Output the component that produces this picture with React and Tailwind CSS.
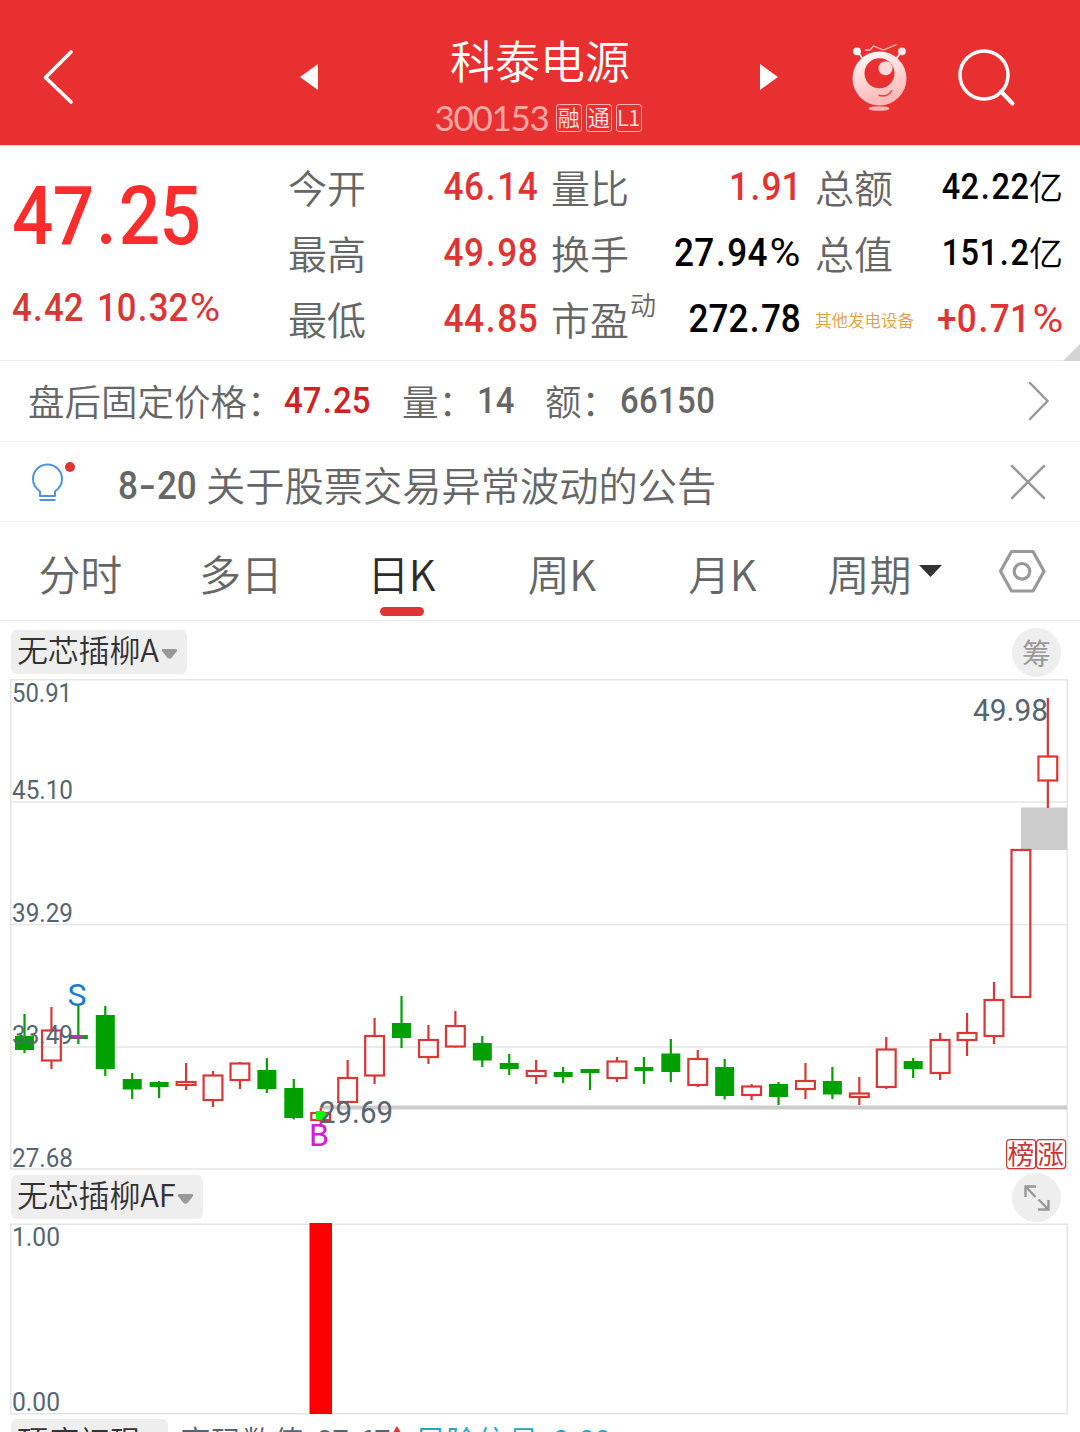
import clsx from 'clsx'

const RED = '#d93636'
const GREEN = '#00a000'

// [direction, high, body top, body bottom, low] in chart pixels
const candles = [
  ['d', 1014, 1036, 1050, 1053],
  ['u', 1007, 1029.5, 1061.5, 1069],
  ['d', 1005, 1035, 1039, 1044],
  ['d', 1006, 1015, 1069, 1076],
  ['d', 1073, 1079, 1089.5, 1099],
  ['d', 1081, 1082, 1087, 1098],
  ['u', 1063, 1081, 1086, 1090],
  ['u', 1071, 1074.5, 1101, 1107],
  ['u', 1062, 1062.5, 1081, 1089],
  ['d', 1058, 1070, 1089, 1093],
  ['d', 1079, 1088, 1118, 1119.5],
  ['u', 1108, 1112, 1121, 1127],
  ['u', 1060, 1077, 1103, 1103],
  ['u', 1018, 1035, 1076.5, 1084],
  ['d', 996, 1023, 1038, 1048],
  ['u', 1025, 1039, 1058, 1064],
  ['u', 1011, 1025, 1047.5, 1047.5],
  ['d', 1036, 1043, 1060.5, 1067],
  ['d', 1054, 1063, 1069, 1075],
  ['u', 1060, 1070, 1077, 1084],
  ['d', 1067, 1072, 1077, 1083],
  ['d', 1069, 1069, 1073, 1090],
  ['u', 1057, 1060.5, 1079, 1082],
  ['d', 1057, 1067, 1071, 1084],
  ['d', 1039, 1053.5, 1072, 1082],
  ['u', 1050, 1058, 1086, 1087],
  ['d', 1059, 1067, 1096, 1099.5],
  ['u', 1084, 1085.5, 1096, 1100],
  ['d', 1082, 1084, 1097, 1105],
  ['u', 1063, 1080, 1090, 1099],
  ['d', 1067, 1081, 1094.5, 1099],
  ['u', 1077, 1092.5, 1098, 1105],
  ['u', 1037, 1048.5, 1088, 1089],
  ['d', 1058, 1061, 1069, 1078],
  ['u', 1033, 1039, 1074, 1080],
  ['u', 1013, 1032, 1041, 1056],
  ['u', 982, 999, 1037, 1044],
  ['u', 849, 849, 998, 998],
  ['u', 698, 755.5, 781.5, 808],
]

const tabs = ['分时', '多日', '日K', '周K', '月K']

// symbols sit a little wider than Roboto sets them
const symbolClass = {
  '.': 'mx-[0.04em]',
  '-': 'inline-block scale-x-[1.4] mx-[0.1em]',
  '%': 'inline-block font-normal scale-x-[1.2] ml-[0.13em] mr-[0.07em]',
}

function Num({ children, className, right }) {
  return (
    <span
      className={clsx(
        'inline-block whitespace-nowrap font-[Roboto,sans-serif] font-medium scale-x-[0.9]',
        right ? 'origin-right' : 'origin-left',
        className,
      )}
    >
      {[...String(children)].map((c, i) =>
        symbolClass[c] ? <span key={i} className={symbolClass[c]}>{c}</span> : c
      )}
    </span>
  )
}

function Label({ children, sup }) {
  return (
    <span className="flex text-[39px] text-[#666] leading-[65px]">
      {children}
      {sup && <span className="text-[26px] leading-[36px] ml-px">{sup}</span>}
    </span>
  )
}

function Candle({ data, x }) {
  const [dir, high, top, bottom, low] = data
  if (dir === 'd') {
    return (
      <g fill={GREEN}>
        <rect x={x - 1.1} y={high} width="2.2" height={low - high} />
        <rect x={x - 9.5} y={top} width="19" height={bottom - top} />
      </g>
    )
  }
  return (
    <g fill="none" stroke={RED} strokeWidth="2.2">
      <path d={`M${x} ${high}V${top + 1}M${x} ${bottom - 1}V${low}`} />
      <rect x={x - 9.4} y={top + 1} width="18.8" height={bottom - top - 2} />
    </g>
  )
}

function ChartText({ x, y, w, size = 25.5, children, fill = '#56656f' }) {
  return (
    <text x={x} y={y} fontSize={size} fill={fill} textLength={w} lengthAdjust="spacingAndGlyphs"
      className="font-[Roboto,sans-serif] font-normal">
      {children}
    </text>
  )
}

function Chip({ children }) {
  return (
    <div className="h-[44px] flex items-center gap-[2px] rounded-[6px] bg-[#eee] pl-[6px] pr-[9px] text-[31px] leading-[42px] text-[#333]">
      <span className="-mt-[6px] tracking-[-0.2px]">{children}</span>
      <svg width="17" height="12" viewBox="0 0 17 12" className="mt-[4px]">
        <path d="M1.500 1h14q1.300 1 .3 2.300L10.500 10q-2 1.500-4 0L1.200 3.300Q.2 2 1.500 1z" fill="#999" />
      </svg>
    </div>
  )
}

function Mascot() {
  return (
    <svg width="60" height="72" viewBox="849 41 60 72">
      <defs>
        <linearGradient id="body" x1="0" y1="0" x2="0.3" y2="1">
          <stop offset="0" stopColor="#fff" />
          <stop offset="0.5" stopColor="#ffdada" />
          <stop offset="1" stopColor="#ffb8b8" />
        </linearGradient>
      </defs>
      <path d="M865 50h5l3.500-4 10 4 13-5.500" fill="none" stroke="#ffc4c4" strokeWidth="1.300" />
      <path d="M857 51l6 8M902 51l-6 8" stroke="#fff" strokeWidth="1.600" />
      <circle cx="857" cy="51.300" r="3.900" fill="#fff" />
      <circle cx="902" cy="51.300" r="3.900" fill="#ffe6e6" />
      <circle cx="879.500" cy="78.500" r="27" fill="url(#body)" />
      <circle cx="879.500" cy="73.300" r="15" fill="#e83030" />
      <circle cx="885.500" cy="68.300" r="7" fill="#ffd9d9" />
      <path d="M878.500 95.300q9 2.500 13.500-5" fill="none" stroke="#e04848" strokeWidth="1.600" />
      <ellipse cx="879" cy="108.500" rx="10.500" ry="2.300" fill="#ffb3b3" />
    </svg>
  )
}

function Header() {
  return (
    <header className="h-[146px] flex bg-[#e83030] border-b border-[#ffd6d6] text-white">
      <div className="w-[320px] pt-[9px] pl-[42px] flex items-center justify-between">
        <svg width="34" height="58" viewBox="0 0 34 58">
          <path d="M29 4L3.500 29.500 29 54" fill="none" stroke="#fff" strokeWidth="3.600" strokeLinecap="round" strokeLinejoin="round" />
        </svg>
        <svg width="21" height="28" viewBox="0 0 21 28"><path d="M1 14L19 1v26z" fill="#fff" /></svg>
      </div>
      <div className="w-[440px] flex flex-col items-center pt-[30px]">
        <h1 className="text-[45px] leading-[60px] font-[350]">科泰电源</h1>
        <div className="flex items-center gap-[4px] mt-[9px] -ml-[4px]">
          <span className="font-[Lato,sans-serif] font-normal text-[35px] leading-[36px] text-[#ffa6a6] tracking-[-1.3px] mr-[3px]">300153</span>
          {['融', '通', 'L1'].map(t => (
            <span key={t} className="w-[26px] h-[28px] mt-px flex items-center justify-center rounded-[3px] border border-[#ffb0b0] text-[22px] leading-[24px] pb-[3px] text-[#ffe4e4] tracking-[-0.5px]">
              {t}
            </span>
          ))}
        </div>
      </div>
      <div className="w-[320px] flex items-center pt-[9px]">
        <svg width="19" height="28" viewBox="0 0 19 28"><path d="M0 1l18 13L0 27z" fill="#fff" /></svg>
        <div className="ml-[70px]"><Mascot /></div>
        <svg width="60" height="60" viewBox="956 47 60 60" className="ml-[47px]">
          <circle cx="984" cy="75" r="24" fill="none" stroke="#fff" strokeWidth="3.500" />
          <path d="M1001 91.500l11.500 12" stroke="#fff" strokeWidth="4" strokeLinecap="round" />
        </svg>
      </div>
    </header>
  )
}

function Quote() {
  return (
    <section className="relative h-[215px] flex border-b border-[#eaeaea] pt-[8px]">
      <div className="w-[288px] pl-[12px] flex flex-col items-start">
        <Num className="text-[81px] leading-[90px] mt-[18px] text-[#fa2d2d] tracking-[-0.8px]">47.25</Num>
        <div className="mt-[21px] flex text-[38.500px] leading-[50px] text-[#d93636]">
          <div className="w-[85px] flex"><Num>4.42</Num></div>
          <Num>10.32%</Num>
        </div>
      </div>
      <div className="w-[250px] flex flex-col">
        {[['今开', '46.14'], ['最高', '49.98'], ['最低', '44.85']].map(([k, v]) => (
          <div key={k} className="h-[66px] flex justify-between">
            <Label>{k}</Label>
            <Num right className="text-[39px] leading-[66px] tracking-[0.5px] text-[#e03434]">{v}</Num>
          </div>
        ))}
      </div>
      <div className="w-[263px] pl-[13px] flex flex-col">
        <div className="h-[66px] flex justify-between">
          <Label>量比</Label>
          <Num right className="text-[39px] leading-[66px] text-[#e03434]">1.91</Num>
        </div>
        <div className="h-[66px] flex justify-between">
          <Label>换手</Label>
          <Num right className="text-[39px] leading-[66px] tracking-[0.3px] text-black">27.94%</Num>
        </div>
        <div className="h-[66px] flex justify-between">
          <Label sup="动">市盈</Label>
          <Num right className="text-[39px] leading-[66px] text-black">272.78</Num>
        </div>
      </div>
      <div className="w-[262px] pl-[14px] flex flex-col">
        {[['总额', '42.22'], ['总值', '151.2']].map(([k, v]) => (
          <div key={k} className="h-[66px] flex text-black">
            <Label>{k}</Label>
            <Num right className="ml-auto text-[36px] leading-[67px] tracking-[0.5px]">{v}</Num>
            <span className="text-[34px] leading-[64px]">亿</span>
          </div>
        ))}
        <div className="h-[66px] flex justify-between">
          <span className="text-[16.500px] leading-[68px] text-[#e0a040] whitespace-nowrap">其他发电设备</span>
          <Num right className="text-[39px] leading-[66px] tracking-[0.3px] text-[#e03434]">+0.71%</Num>
        </div>
      </div>
      <svg width="17" height="17" viewBox="0 0 17 17" className="absolute right-0 bottom-[-1px]">
        <path d="M17 0v17H0z" fill="#d4d4d4" />
      </svg>
    </section>
  )
}

function AfterHours() {
  return (
    <section className="h-[81px] flex items-center border-b border-[#eee] pl-[28px] pr-[30px] text-[36.500px] text-[#666]">
      <span className="w-[256px] whitespace-nowrap">盘后固定价格：</span>
      <div className="w-[118px] flex"><Num className="text-[36.500px] text-[#cc2424]">47.25</Num></div>
      <span className="w-[75px] whitespace-nowrap">量：</span>
      <div className="w-[68px] flex"><Num className="text-[36.500px]">14</Num></div>
      <span className="w-[75px] whitespace-nowrap">额：</span>
      <Num className="text-[36.500px] tracking-[0.4px]">66150</Num>
      <svg width="24" height="42" viewBox="0 0 24 42" className="ml-auto">
        <path d="M4 3l17.500 18L4 39" fill="none" stroke="#999" strokeWidth="2.500" strokeLinecap="round" />
      </svg>
    </section>
  )
}

function Notice() {
  return (
    <section className="h-[80px] flex items-center border-b border-[#eee] pl-[30px] pr-[33px] text-[#666]">
      <svg width="48" height="44" viewBox="30 459 48 44" fill="none" stroke="#4f94d8" strokeWidth="2">
        <path d="M39.500 499h16M40 495h15v-4.500q7-5 7-12.500a14.500 14.500 0 0 0-29 0q0 7.500 7 12.500z" strokeLinejoin="round" />
        <circle cx="70" cy="466" r="5" fill="#e03434" stroke="none" />
      </svg>
      <div className="flex ml-[40px] pt-[9px]">
        <div className="w-[88px] flex"><Num className="text-[39px] leading-[56px]">8-20</Num></div>
        <span className="text-[39.250px] leading-[52px]">关于股票交易异常波动的公告</span>
      </div>
      <svg width="38" height="38" viewBox="0 0 38 38" className="ml-auto">
        <path d="M3 3l32 32M35 3L3 35" stroke="#999" strokeWidth="2.500" strokeLinecap="round" />
      </svg>
    </section>
  )
}

function Tabs() {
  return (
    <nav className="h-[99px] flex border-b border-[#eee] text-[42px] text-[#666]">
      {tabs.map(t => (
        <div key={t} className={clsx('w-[160.500px] flex flex-col items-center pt-[20px]', t === '日K' && 'text-[#2c2c2c]')}>
          <span className="leading-[62px] tracking-[-0.3px]">{t}</span>
          {t === '日K' && <span className="w-[44px] h-[9px] rounded-full bg-[#e03434] mt-[3px] ml-px" />}
        </div>
      ))}
      <div className="flex pt-[20px] pl-[25px] gap-[7px]">
        <span className="leading-[62px]">周期</span>
        <svg width="23" height="12" viewBox="0 0 23 12" className="mt-[23px]"><path d="M0 0h23L11.500 12z" fill="#333" /></svg>
      </div>
      <svg width="48" height="44" viewBox="998 549 48 44" className="ml-auto mr-[34px] mt-[27px]" fill="none" stroke="#999" strokeWidth="3.200">
        <path d="M1011.500 551.500h21.500L1044 571.300 1033 591h-21.500L1000.500 571.300z" strokeLinejoin="round" />
        <circle cx="1022" cy="571.300" r="7.800" />
      </svg>
    </nav>
  )
}

function PriceChart() {
  return (
    <svg width="1080" height="492" viewBox="0 679 1080 492" className="block">
      <g stroke="#e6e6e6" strokeWidth="1.500" fill="none">
        <path d="M10.750 679.750H1067.200V1169H10.750z" />
        <path d="M11 802H1067M11 924.500H1067M11 1047H1067" />
      </g>
      <rect x="1021" y="807.500" width="46" height="42.500" fill="#ccc" />
      <rect x="320" y="1105.500" width="747" height="4" fill="#ccc" />
      {candles.map((c, i) => <Candle key={i} data={c} x={24.5 + i * 26.93} />)}
      <rect x="72" y="1035" width="12" height="3.500" fill="#d020d0" />
      <path d="M316 1111h8l3 4-4 5h-7z" fill="#00ff00" />
      <ChartText x="12" y="702" w="60">50.91</ChartText>
      <ChartText x="12" y="799" w="61">45.10</ChartText>
      <ChartText x="12" y="922" w="61">39.29</ChartText>
      <ChartText x="12" y="1044" w="61">33.49</ChartText>
      <ChartText x="12" y="1167" w="61">27.68</ChartText>
      <ChartText x="973" y="721" w="75" size={31}>49.98</ChartText>
      <ChartText x="319" y="1123" w="74" size={31}>29.69</ChartText>
      <ChartText x="67.500" y="1006" w="19" size={31} fill="#1a7cc8">S</ChartText>
      <ChartText x="309" y="1146" w="20" size={31} fill="#d020d0">B</ChartText>
      <g fill="none" stroke="#c04040" strokeWidth="1.200">
        <rect x="1006.600" y="1139.600" width="29" height="29" rx="3" />
        <rect x="1036.600" y="1139.600" width="29" height="29" rx="3" />
      </g>
      <g fontSize="26.500" fill="#c83838" className="font-normal">
        <text x="1007.700" y="1163.500">榜</text>
        <text x="1037.500" y="1163.500">涨</text>
      </g>
    </svg>
  )
}

function SignalChart() {
  return (
    <svg width="1080" height="192" viewBox="0 1223 1080 192" className="block">
      <path d="M10.750 1224.200H1067.200V1413.800H10.750z" stroke="#e6e6e6" strokeWidth="1.500" fill="none" />
      <rect x="309.500" y="1223" width="22.500" height="191" fill="#ff0000" />
      <ChartText x="12" y="1246" w="48">1.00</ChartText>
      <ChartText x="12" y="1411" w="48">0.00</ChartText>
    </svg>
  )
}

export default function App() {
  return (
    <div className="w-[1080px] h-[1432px] overflow-hidden bg-white font-['Noto_Sans_CJK_SC',sans-serif] font-[350]">
      <Header />
      <Quote />
      <AfterHours />
      <Notice />
      <Tabs />
      <div className="h-[58px] flex items-start justify-between pl-[11px] pr-[19px] pt-[6px]">
        <div className="pt-[3px]"><Chip>无芯插柳A</Chip></div>
        <span className="size-[49px] mt-px rounded-full bg-[#eee] text-[#999] text-[29px] font-normal flex items-center justify-center leading-none">筹</span>
      </div>
      <PriceChart />
      <div className="h-[52px] flex items-start justify-between pl-[11px] pr-[19px] pt-[2px]">
        <div className="pt-[2px]"><Chip>无芯插柳AF</Chip></div>
        <span className="size-[49px] rounded-full bg-[#eee] flex items-center justify-center">
          <svg width="26" height="26" viewBox="0 0 26 26" fill="none" stroke="#999" strokeWidth="2.400">
            <path d="M1.500 12V1.500H12M2 2l9.500 10M24.500 15v9.500H14M24 24l-9.500-9.500" />
          </svg>
        </span>
      </div>
      <SignalChart />
      <div className="h-[60px] flex items-start pl-[11px] pt-[4px] text-[31px] leading-[41px] text-[#56656f]">
        <div className="w-[157px] h-[44px] rounded-[6px] bg-[#eee] pl-[6px] text-[#333]">顶底初现</div>
        <span className="w-[137px] pl-[12px] whitespace-nowrap">密码数值</span>
        <div className="w-[73px] pl-[12px] flex"><Num className="text-[31px] leading-[46px]">37.67</Num></div>
        <svg width="14" height="20" viewBox="0 0 14 20" className="mt-[7px] ml-[12px]">
          <path d="M7 0l6 10H9v10H5V10H1z" fill="#e03434" />
        </svg>
        <span className="ml-[11px] w-[138px] text-[#22a8c0] whitespace-nowrap">风险信号</span>
        <Num className="text-[31px] leading-[46px] text-[#22a8c0]">0.00</Num>
      </div>
    </div>
  )
}
